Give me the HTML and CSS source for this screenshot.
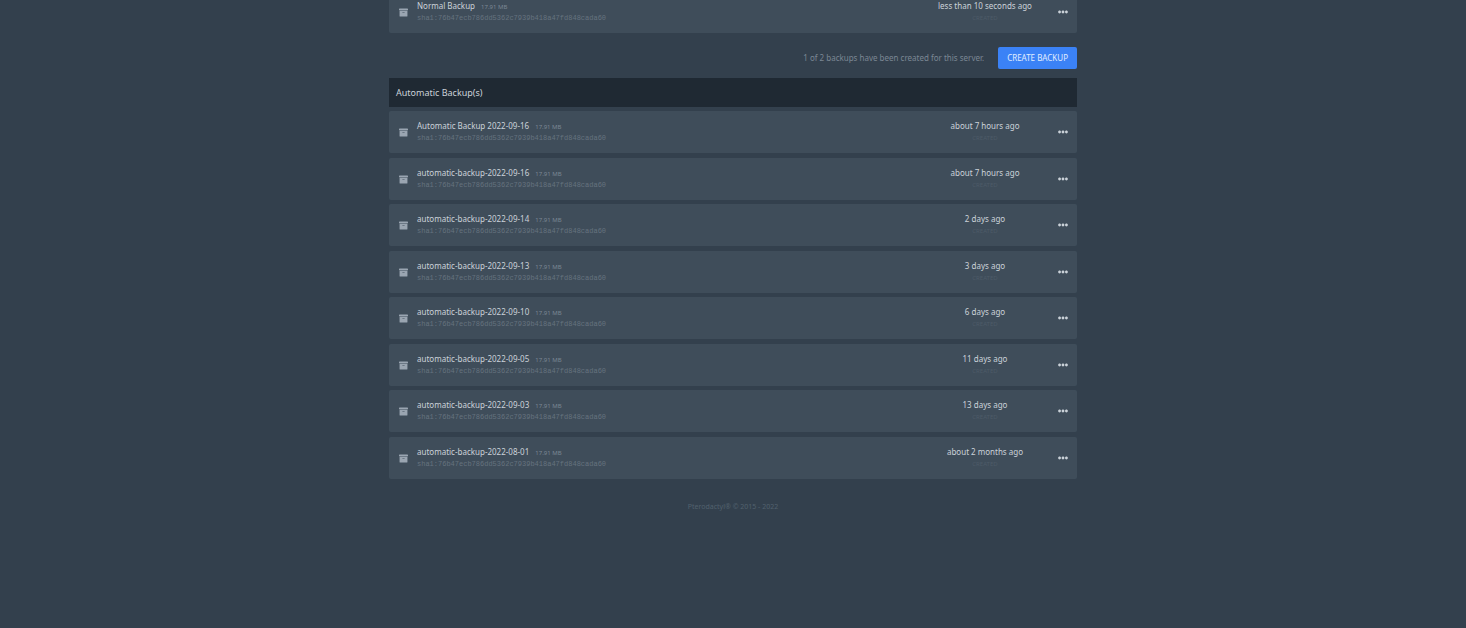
FILE: index.html
```
<!DOCTYPE html>
<html lang="en">
<head>
<meta charset="utf-8">
<title>Backups</title>
<link rel="stylesheet" href="styles.css">
</head>
<body>

<svg class="sprite" aria-hidden="true">
	<symbol id="archive" viewBox="0 0 512 512">
		<path d="M32 448c0 17.700 14.300 32 32 32h384c17.700 0 32-14.300 32-32V160H32v288zm160-212c0-6.600 5.400-12 12-12h104c6.600 0 12 5.400 12 12v8c0 6.600-5.400 12-12 12H204c-6.600 0-12-5.400-12-12v-8zM480 32H32C14.300 32 0 46.300 0 64v48c0 8.800 7.200 16 16 16h480c8.800 0 16-7.200 16-16V64c0-17.700-14.300-32-32-32z"/>
	</symbol>
	<symbol id="dots" viewBox="0 0 512 512">
		<path d="M328 256c0 39.800-32.200 72-72 72s-72-32.200-72-72 32.200-72 72-72 72 32.200 72 72zm104-72c-39.800 0-72 32.200-72 72s32.200 72 72 72 72-32.200 72-72-32.200-72-72-72zm-352 0c-39.800 0-72 32.200-72 72s32.200 72 72 72 72-32.200 72-72-32.200-72-72-72z"/>
	</symbol>
</svg>

<main class="container">
	<ul class="backups">
		<li class="row">
			<svg class="icon"><use href="#archive"/></svg>
			<div class="info"><p class="title">Normal Backup <span class="size">17.91 MB</span></p><p class="hash">sha1:76b47ecb786dd5362c7939b418a47fd848cada60</p></div>
			<div class="date"><p class="ago">less than 10 seconds ago</p><p class="label">CREATED</p></div>
			<button class="menu" aria-label="Options"><svg class="dots"><use href="#dots"/></svg></button>
		</li>
	</ul>

	<div class="actions">
		<p class="count">1 of 2 backups have been created for this server.</p>
		<button class="create">CREATE BACKUP</button>
	</div>

	<h2 class="heading">Automatic Backup(s)</h2>

	<ul class="backups">
		<li class="row">
			<svg class="icon"><use href="#archive"/></svg>
			<div class="info"><p class="title">Automatic Backup 2022-09-16 <span class="size">17.91 MB</span></p><p class="hash">sha1:76b47ecb786dd5362c7939b418a47fd848cada60</p></div>
			<div class="date"><p class="ago">about 7 hours ago</p><p class="label">CREATED</p></div>
			<button class="menu" aria-label="Options"><svg class="dots"><use href="#dots"/></svg></button>
		</li>
		<li class="row">
			<svg class="icon"><use href="#archive"/></svg>
			<div class="info"><p class="title">automatic-backup-2022-09-16 <span class="size">17.91 MB</span></p><p class="hash">sha1:76b47ecb786dd5362c7939b418a47fd848cada60</p></div>
			<div class="date"><p class="ago">about 7 hours ago</p><p class="label">CREATED</p></div>
			<button class="menu" aria-label="Options"><svg class="dots"><use href="#dots"/></svg></button>
		</li>
		<li class="row">
			<svg class="icon"><use href="#archive"/></svg>
			<div class="info"><p class="title">automatic-backup-2022-09-14 <span class="size">17.91 MB</span></p><p class="hash">sha1:76b47ecb786dd5362c7939b418a47fd848cada60</p></div>
			<div class="date"><p class="ago">2 days ago</p><p class="label">CREATED</p></div>
			<button class="menu" aria-label="Options"><svg class="dots"><use href="#dots"/></svg></button>
		</li>
		<li class="row">
			<svg class="icon"><use href="#archive"/></svg>
			<div class="info"><p class="title">automatic-backup-2022-09-13 <span class="size">17.91 MB</span></p><p class="hash">sha1:76b47ecb786dd5362c7939b418a47fd848cada60</p></div>
			<div class="date"><p class="ago">3 days ago</p><p class="label">CREATED</p></div>
			<button class="menu" aria-label="Options"><svg class="dots"><use href="#dots"/></svg></button>
		</li>
		<li class="row">
			<svg class="icon"><use href="#archive"/></svg>
			<div class="info"><p class="title">automatic-backup-2022-09-10 <span class="size">17.91 MB</span></p><p class="hash">sha1:76b47ecb786dd5362c7939b418a47fd848cada60</p></div>
			<div class="date"><p class="ago">6 days ago</p><p class="label">CREATED</p></div>
			<button class="menu" aria-label="Options"><svg class="dots"><use href="#dots"/></svg></button>
		</li>
		<li class="row">
			<svg class="icon"><use href="#archive"/></svg>
			<div class="info"><p class="title">automatic-backup-2022-09-05 <span class="size">17.91 MB</span></p><p class="hash">sha1:76b47ecb786dd5362c7939b418a47fd848cada60</p></div>
			<div class="date"><p class="ago">11 days ago</p><p class="label">CREATED</p></div>
			<button class="menu" aria-label="Options"><svg class="dots"><use href="#dots"/></svg></button>
		</li>
		<li class="row">
			<svg class="icon"><use href="#archive"/></svg>
			<div class="info"><p class="title">automatic-backup-2022-09-03 <span class="size">17.91 MB</span></p><p class="hash">sha1:76b47ecb786dd5362c7939b418a47fd848cada60</p></div>
			<div class="date"><p class="ago">13 days ago</p><p class="label">CREATED</p></div>
			<button class="menu" aria-label="Options"><svg class="dots"><use href="#dots"/></svg></button>
		</li>
		<li class="row">
			<svg class="icon"><use href="#archive"/></svg>
			<div class="info"><p class="title">automatic-backup-2022-08-01 <span class="size">17.91 MB</span></p><p class="hash">sha1:76b47ecb786dd5362c7939b418a47fd848cada60</p></div>
			<div class="date"><p class="ago">about 2 months ago</p><p class="label">CREATED</p></div>
			<button class="menu" aria-label="Options"><svg class="dots"><use href="#dots"/></svg></button>
		</li>
	</ul>

	<footer class="footer"><a href="#">Pterodactyl®</a> © 2015 - 2022</footer>
</main>

</body>
</html>
```
FILE: styles.css
```
* { box-sizing: border-box; }
body {
	margin: 0;
	background-color: #33404d;
	color: #cbd2d9;
	font-family: "Noto Sans", sans-serif;
	font-size: 8px;
	line-height: 12px;
}
p, ul, h2 { margin: 0; padding: 0; }
button { border: 0; padding: 0; font-family: inherit; cursor: pointer; }
.sprite { display: none; }

.container { max-width: 688px; margin: 0 auto; }

.backups { list-style: none; }
.row {
	display: flex;
	align-items: center;
	padding: 9px 9px 9px 10px;
	margin-bottom: 5px;
	background-color: #3f4d5a;
	border-radius: 2px;
}
.row:nth-child(even) { margin-bottom: 4px; }
.row:last-child { margin-bottom: 0; }
/* the first list is scrolled partly out of view */
.backups:first-of-type { margin-top: -9px; }
.heading + .backups { margin-top: 0; }

.icon { width: 9px; height: 9px; margin-right: 9px; fill: #9aa5b1; }
.info { flex: 1; }
.title { color: #cbd2d9; }
.size { margin-left: 4px; font-size: 6px; line-height: 8px; color: #7b8794; }
.hash {
	font-family: "Liberation Mono", monospace;
	font-size: 7px;
	color: #66737f;
}
.date { width: 110px; text-align: center; }
.label { font-size: 6px; color: #4d5b68; }
.menu { display: flex; margin-left: 18px; background: none; }
.dots { width: 10px; height: 10px; fill: #cbd2d9; }

.actions {
	display: flex;
	justify-content: flex-end;
	align-items: center;
	gap: 14px;
	padding: 14px 0 9px;
}
.count { color: #7b8794; }
.create {
	padding: 5px 9px;
	border-radius: 2px;
	background-color: #3b82f6;
	color: #e0edff;
	font-size: 8px;
	line-height: 12px;
}

.heading {
	padding: 8px 7px;
	margin-bottom: 4px;
	background-color: #1f2933;
	font-size: 9px;
	font-weight: normal;
	line-height: 13px;
}

.footer { padding: 22px 0; text-align: center; font-size: 7px; color: #52606d; }
.footer a { color: inherit; text-decoration: none; }
```
